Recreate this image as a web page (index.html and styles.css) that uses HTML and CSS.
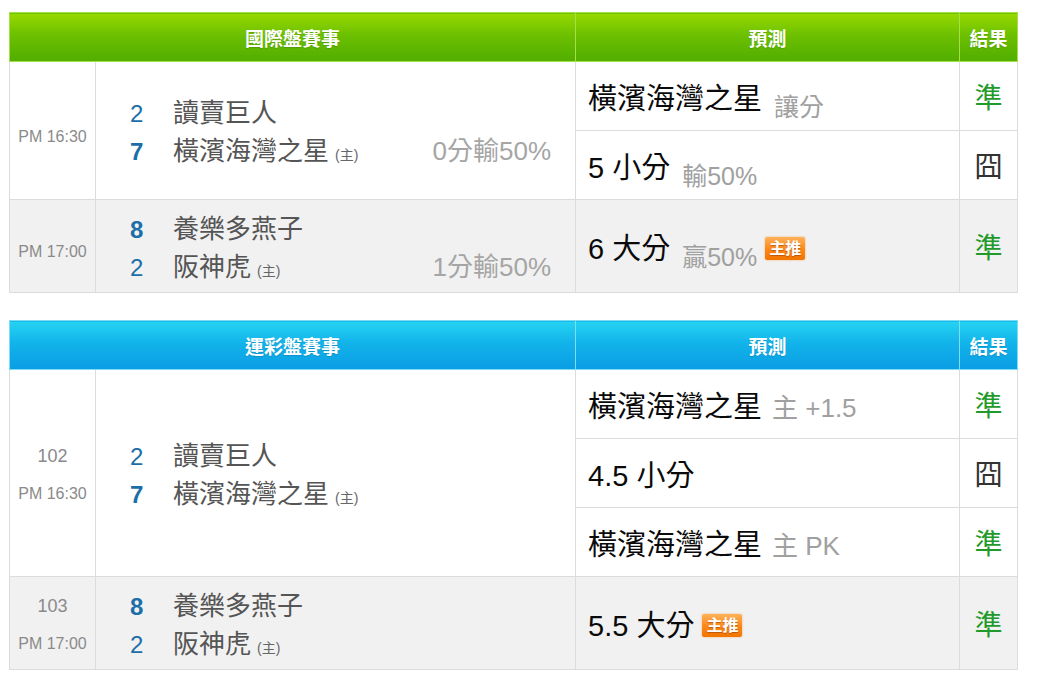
FILE: index.html
```html
<!DOCTYPE html>
<html lang="zh-Hant">
<head>
<meta charset="utf-8">
<link rel="stylesheet" href="styles.css">
</head>
<body>
<div class="page">
  <table class="board green">
    <colgroup><col class="c-time"><col class="c-teams"><col class="c-pred"><col class="c-res"></colgroup>
    <thead>
      <tr><th colspan="2">國際盤賽事</th><th>預測</th><th>結果</th></tr>
    </thead>
    <tbody>
      <tr class="odd">
        <td class="time single" rowspan="2"><div>PM 16:30</div></td>
        <td class="teams" rowspan="2">
          <div class="team"><span class="num">2</span><span class="name">讀賣巨人</span></div>
          <div class="team"><span class="num win">7</span><span class="name">橫濱海灣之星</span><span class="home">(主)</span><span class="odds">0分輸50%</span></div>
        </td>
        <td class="pred"><span class="main">橫濱海灣之星</span><span class="sub low">讓分</span></td>
        <td class="res ok">準</td>
      </tr>
      <tr class="odd">
        <td class="pred"><span class="main">5 小分</span><span class="sub low">輸50%</span></td>
        <td class="res bad">囧</td>
      </tr>
      <tr class="even">
        <td class="time single"><div>PM 17:00</div></td>
        <td class="teams">
          <div class="team"><span class="num win">8</span><span class="name">養樂多燕子</span></div>
          <div class="team"><span class="num">2</span><span class="name">阪神虎</span><span class="home">(主)</span><span class="odds">1分輸50%</span></div>
        </td>
        <td class="pred tall"><span class="main">6 大分</span><span class="sub low">贏50%</span><span class="badge">主推</span></td>
        <td class="res ok">準</td>
      </tr>
    </tbody>
  </table>

  <table class="board blue">
    <colgroup><col class="c-time"><col class="c-teams"><col class="c-pred"><col class="c-res"></colgroup>
    <thead>
      <tr><th colspan="2">運彩盤賽事</th><th>預測</th><th>結果</th></tr>
    </thead>
    <tbody>
      <tr class="odd">
        <td class="time" rowspan="3"><div>102</div><div>PM 16:30</div></td>
        <td class="teams" rowspan="3">
          <div class="team"><span class="num">2</span><span class="name">讀賣巨人</span></div>
          <div class="team"><span class="num win">7</span><span class="name">橫濱海灣之星</span><span class="home">(主)</span></div>
        </td>
        <td class="pred"><span class="main">橫濱海灣之星</span><span class="sub">主 +1.5</span></td>
        <td class="res ok">準</td>
      </tr>
      <tr class="odd">
        <td class="pred"><span class="main">4.5 小分</span></td>
        <td class="res bad">囧</td>
      </tr>
      <tr class="odd">
        <td class="pred"><span class="main">橫濱海灣之星</span><span class="sub">主 PK</span></td>
        <td class="res ok">準</td>
      </tr>
      <tr class="even">
        <td class="time"><div>103</div><div>PM 17:00</div></td>
        <td class="teams">
          <div class="team"><span class="num win">8</span><span class="name">養樂多燕子</span></div>
          <div class="team"><span class="num">2</span><span class="name">阪神虎</span><span class="home">(主)</span></div>
        </td>
        <td class="pred tall"><span class="main">5.5 大分</span><span class="badge">主推</span></td>
        <td class="res ok">準</td>
      </tr>
    </tbody>
  </table>
</div>
</body>
</html>
```

FILE: styles.css
```css
* { box-sizing: border-box; }
html, body { margin: 0; padding: 0; background: #fff; }
body {
  font-family: "Liberation Sans", "Noto Sans CJK TC", sans-serif;
  color: #222;
}
.page {
  padding: 12px 0 0 9px;
  display: flex;
  flex-direction: column;
  gap: 27px;
  width: 1017px;
}
.board {
  width: 1008px;
  border-collapse: collapse;
  table-layout: fixed;
}
.c-time { width: 86px; }
.c-teams { width: 480px; }
.c-pred { width: 384px; }
.c-res { width: 58px; }

.board th {
  height: 49px;
  color: #fff;
  font-size: 19px;
  font-weight: bold;
  text-align: center;
  padding: 0;
  text-shadow: 0 1px 1px rgba(0,0,0,0.15);
}
.green th {
  background: linear-gradient(#97d900 0%, #6cc000 45%, #51ad00 100%);
  border: 1px solid #a4e04a;
}
.blue th {
  background: linear-gradient(#25d3f2 0%, #12b3ea 45%, #0a9de4 100%);
  border: 1px solid #7fdcf5;
}
.board td {
  border: 1px solid #dcdcdc;
  padding: 0;
  vertical-align: middle;
}
.odd td { background: #fff; }
.even td { background: #f1f1f1; }

.time {
  text-align: center;
  color: #8a8a8a;
  font-size: 16px;
  padding-top: 4px !important;
}
.time div { line-height: 37px; }
.time div:first-child { font-size: 18px; }
.time.single { padding-top: 0 !important; }
.time.single div { font-size: 16px; padding-top: 11px; }

.teams { padding: 3px 24px 0 34px !important; }
.team {
  display: flex;
  align-items: baseline;
  height: 38px;
  line-height: 38px;
}
.num {
  width: 43px;
  flex: none;
  color: #1b6ea8;
  font-size: 24px;
}
.num.win { font-weight: bold; }
.name {
  color: #555;
  font-size: 26px;
}
.home {
  color: #666;
  font-size: 14px;
  margin-left: 6px;
}
.odds {
  margin-left: auto;
  color: #a5a5a5;
  font-size: 26px;
}

.pred {
  height: 69px;
  padding-left: 12px !important;
  white-space: nowrap;
}
.pred.tall { height: 93px; }
.main {
  font-size: 29px;
  color: #0a0a0a;
}
.sub {
  font-size: 26px;
  color: #a0a0a0;
  margin-left: 10px;
}
.sub.low {
  font-size: 25px;
  margin-left: 12px;
  position: relative;
  top: 7px;
}
.badge {
  display: inline-block;
  vertical-align: 5px;
  margin-left: 8px;
  height: 23px;
  line-height: 23px;
  padding: 0 4px;
  font-size: 16px;
  font-weight: bold;
  color: #fff;
  border-radius: 2px;
  background: linear-gradient(#ffb25a 0%, #fb8a1c 50%, #f27400 100%);
  box-shadow: 0 0 2px rgba(240,120,0,0.6);
  text-shadow: 0 1px 1px rgba(150,60,0,0.6);
}
.res {
  text-align: center;
  font-size: 28px;
}
.res.ok { color: #1f9a2b; }
.res.bad { color: #333; }
```
